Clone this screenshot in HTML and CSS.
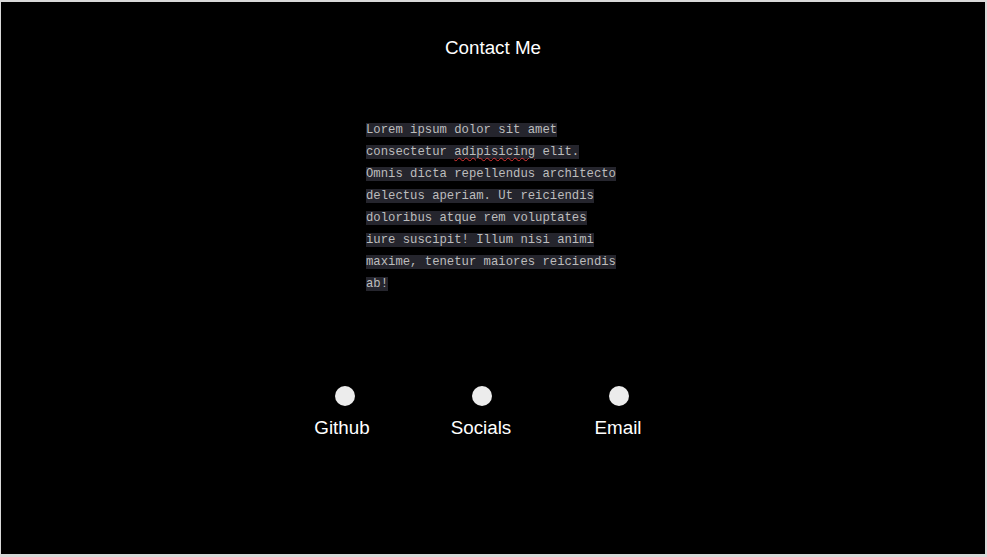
FILE: index.html
```html
<!DOCTYPE html>
<html>
<head>
<meta charset="utf-8">
<link rel="stylesheet" href="styles.css">
</head>
<body>
<main class="page">
  <h1 class="title">Contact Me</h1>
  <p class="blurb"><span class="sel">Lorem ipsum dolor sit amet consectetur <span class="spell">adipisicing</span> elit. Omnis dicta repellendus architecto delectus aperiam. Ut reiciendis doloribus atque rem voluptates iure suscipit! Illum nisi animi maxime, tenetur maiores reiciendis ab!</span></p>
  <ul class="links">
    <li class="link"><span class="dot"></span><span class="label">Github</span></li>
    <li class="link"><span class="dot"></span><span class="label">Socials</span></li>
    <li class="link"><span class="dot"></span><span class="label">Email</span></li>
  </ul>
</main>
</body>
</html>
```
FILE: styles.css
```css
html {
  margin: 0;
  background: #d9d9d9;
}
body {
  margin: 0;
  padding: 2px 2px 3px 1px;
  height: 557px;
  box-sizing: border-box;
}
.page {
  background: #000;
  height: 100%;
  display: flex;
  flex-direction: column;
  align-items: center;
  padding-top: 35px;
  box-sizing: border-box;
}
.title {
  margin: 0;
  font-family: "Liberation Sans", Arial, sans-serif;
  font-weight: normal;
  font-size: 18.8px;
  line-height: 22px;
  color: #fff;
}
.blurb {
  margin: 59.5px 0 0 0;
  width: 254px;
  font-family: "Liberation Mono", "Courier New", monospace;
  font-size: 12.25px;
  line-height: 22px;
  color: #bdbdbd;
}
.sel {
  background: #25252d;
}
.spell {
  text-decoration: underline wavy #d33;
  text-decoration-thickness: 1px;
  text-underline-offset: 2px;
}
.links {
  list-style: none;
  margin: 91.5px 0 0 0;
  padding: 0 24px 0 0;
  display: flex;
}
.link {
  width: 137px;
  box-sizing: border-box;
  display: flex;
  flex-direction: column;
  align-items: center;
}
.link:first-child {
  padding-right: 4px;
}
.dot {
  width: 20px;
  height: 20px;
  border-radius: 50%;
  background: #ececec;
  margin-left: 6px;
}
.link:nth-child(2) .dot { margin-left: 2px; }
.link:nth-child(3) .dot { margin-left: 1px; }
.label {
  margin-top: 11px;
  font-family: "Liberation Sans", Arial, sans-serif;
  font-size: 18.8px;
  line-height: 22px;
  color: #fff;
}
```
